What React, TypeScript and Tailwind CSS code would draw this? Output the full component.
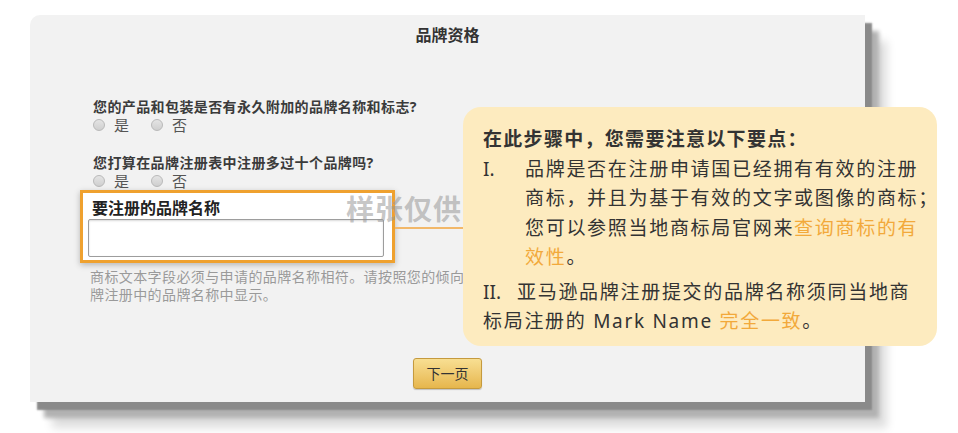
import React from "react";

const cjk = "font-['Noto_Sans','Noto_Sans_CJK_SC',sans-serif]";

function Radio({ label }: { label: string }) {
  return (
    <span className="flex items-center">
      <span className="h-[12px] w-[12px] rounded-full border border-[#b9b9b9] bg-gradient-to-b from-[#e4e4e4] to-[#cfcfcf]" />
      <span className="ml-[9px] text-[15px] text-[#555]">{label}</span>
    </span>
  );
}

function Question({ text }: { text: string }) {
  return (
    <div>
      <div className="text-[14px] leading-[18px] font-bold tracking-[0.4px] text-[#3b3b3b]">{text}</div>
      <div className="flex h-[18px] items-center gap-[22px]">
        <Radio label="是" />
        <Radio label="否" />
      </div>
    </div>
  );
}

export default function App() {
  return (
    <div className={`relative h-[433px] w-[958px] overflow-hidden bg-white pl-[30px] pt-[15px] ${cjk}`}>
      {/* form panel */}
      <div className="flex h-[387px] w-[835px] flex-col rounded-tl-[10px] bg-[#f2f2f2] shadow-[7px_8px_2px_0_#8a8a8a,14px_16px_4px_0_#b2b2b2,22px_26px_10px_0_#dedede]">
        <div className="pt-[10px] text-center text-[16px] leading-[20px] font-bold text-[#333]">品牌资格</div>

        <div className="mt-[53px] pl-[63px]">
          <Question text="您的产品和包装是否有永久附加的品牌名称和标志?" />
          <div className="mt-[20px]">
            <Question text="您打算在品牌注册表中注册多过十个品牌吗?" />
          </div>

          <div className="relative z-10 -ml-[13px] w-[315px] border-[3px] border-[#efa12f] bg-white px-[5px] pb-[3px] pt-[5px] shadow-[0_2px_6px_rgba(0,0,0,0.25)]">
            <div className="ml-[4px] text-[16px] leading-[20px] font-bold text-[#222]">要注册的品牌名称</div>
            <div className="mt-[1px] h-[38px] w-[296px] rounded-[2px] border border-[#9d9d9d] bg-white shadow-[inset_0_1px_2px_rgba(0,0,0,0.15)]" />
          </div>

          <div className="mt-[5px] -ml-[3px] text-[14px] leading-[18px] tracking-[0.4px] text-[#9a9a9a]">
            <div className="whitespace-nowrap">商标文本字段必须与申请的品牌名称相符。请按照您的倾向</div>
            <div className="whitespace-nowrap">牌注册中的品牌名称中显示。</div>
          </div>
        </div>

        <div className="mt-[54px] flex justify-center">
          <button className="h-[31px] w-[69px] rounded-[3px] border border-[#c59a3e] bg-gradient-to-b from-[#f8df92] to-[#e6b64c] text-[14px] text-[#333] shadow-[0_1px_1px_rgba(0,0,0,0.2)]">
            下一页
          </button>
        </div>
      </div>

      {/* watermark, partly under the callout */}
      <div className="absolute left-[346px] top-[193px] z-[15] text-[28px] leading-[32px] font-bold tracking-[1px] text-[rgba(150,150,150,0.55)]">样张仅供</div>
      <div className="absolute left-[395px] top-[227px] z-10 h-[2px] w-[70px] bg-[#f2b86a]" />

      {/* callout */}
      <div className="absolute left-[463px] top-[107px] z-20 h-[239px] w-[474px] rounded-[18px] bg-[#fdebbf] pl-[20px] pt-[18px] text-[19px] leading-[29.5px] tracking-[1.7px] text-[#333]">
        <div className="font-bold tracking-[1.3px]">在此步骤中，您需要注意以下要点：</div>
        <div className="flex items-start">
          <span className="w-[42px] shrink-0 tracking-normal">I.</span>
          <div className="whitespace-nowrap">
            <div>品牌是否在注册申请国已经拥有有效的注册</div>
            <div>商标，并且为基于有效的文字或图像的商标；</div>
            <div>
              您可以参照当地商标局官网来<span className="text-[#f2a93b]">查询商标的有</span>
            </div>
            <div>
              <span className="text-[#f2a93b]">效性</span>。
            </div>
          </div>
        </div>
        <div className="mt-[5px] flex items-start">
          <span className="w-[34px] shrink-0 tracking-normal">II.</span>
          <div className="whitespace-nowrap">
            <div>亚马逊品牌注册提交的品牌名称须同当地商</div>
            <div className="-ml-[34px]">
              标局注册的 Mark Name <span className="text-[#f2a93b]">完全一致</span>。
            </div>
          </div>
        </div>
      </div>
    </div>
  );
}
